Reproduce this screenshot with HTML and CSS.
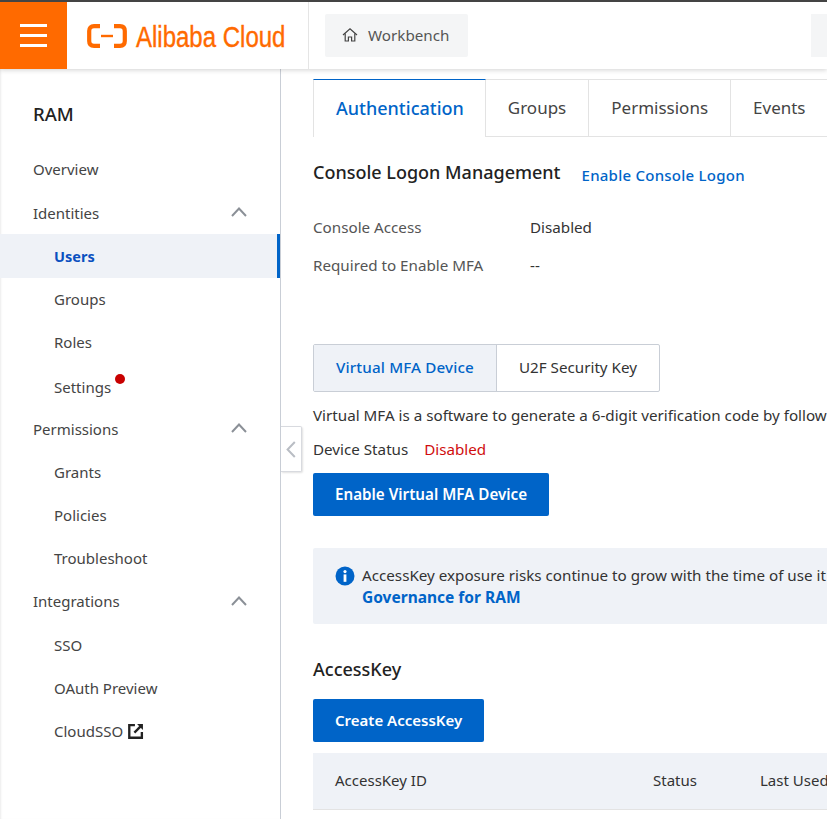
FILE: index.html
```html
<!DOCTYPE html>
<html lang="en">
<head>
    <meta charset="UTF-8">
    <meta name="viewport" content="width=device-width, initial-scale=1.0">
    <title>RAM - Users</title>
    <link rel="stylesheet" href="styles.css">
</head>
<body>
    <header class="topbar">
        <button class="menu-btn" aria-label="Menu">
            <span></span><span></span><span></span>
        </button>
        <div class="logo">
            <svg class="logo-mark" width="40" height="24" viewBox="0 0 40 24" fill="none" stroke="#ff6a00">
                <path d="M13 2.2H7Q2.2 2.2 2.2 7V17Q2.2 21.8 7 21.8H13" stroke-width="4.2"/>
                <path d="M27 2.2H33Q37.8 2.2 37.8 7V17Q37.8 21.8 33 21.8H27" stroke-width="4.2"/>
                <path d="M14 12H26" stroke-width="2.4"/>
            </svg>
            <span class="logo-text">Alibaba Cloud</span>
        </div>
        <div class="topbar-links">
            <a class="workbench">
                <svg width="16" height="16" viewBox="0 0 16 16" fill="none" stroke="#444" stroke-width="1.2">
                    <path d="M1 8 8 1.8 15 8"/>
                    <path d="M3.2 6.6V14H6.4V10H9.6V14H12.8V6.6"/>
                </svg>
                Workbench
            </a>
            <div class="top-stub"></div>
        </div>
    </header>

    <div class="layout">
        <aside class="sidebar">
            <h2 class="side-title">RAM</h2>
            <ul class="nav">
                <li class="nav-item">Overview</li>
                <li class="nav-item">Identities <svg class="caret" width="16" height="10" viewBox="0 0 16 10"><path d="M1 9 8 1.5 15 9"/></svg></li>
                <li class="nav-item sub active">Users</li>
                <li class="nav-item sub">Groups</li>
                <li class="nav-item sub">Roles</li>
                <li class="nav-item sub settings"><span class="with-dot">Settings<i class="dot"></i></span></li>
                <li class="nav-item">Permissions <svg class="caret" width="16" height="10" viewBox="0 0 16 10"><path d="M1 9 8 1.5 15 9"/></svg></li>
                <li class="nav-item sub">Grants</li>
                <li class="nav-item sub">Policies</li>
                <li class="nav-item sub">Troubleshoot</li>
                <li class="nav-item">Integrations <svg class="caret" width="16" height="10" viewBox="0 0 16 10"><path d="M1 9 8 1.5 15 9"/></svg></li>
                <li class="nav-item sub">SSO</li>
                <li class="nav-item sub">OAuth Preview</li>
                <li class="nav-item sub">CloudSSO
                    <svg class="ext" width="16" height="16" viewBox="0 0 15 15" fill="none" stroke="#222">
                        <path d="M6.5 2H1.2V13.8H13V8.5" stroke-width="2.2"/>
                        <path d="M6 9 12.5 2.5" stroke-width="2.2"/>
                        <path d="M8.5 1H14V6.5Z" fill="#222" stroke="none"/>
                    </svg>
                </li>
            </ul>
        </aside>

        <button class="collapse" aria-label="Collapse">
            <svg width="10" height="17" viewBox="0 0 10 17" fill="none" stroke="#b9bdc4" stroke-width="2"><path d="M8.8 1 1.6 8.5 8.8 16"/></svg>
        </button>

        <main class="content">
            <div class="tabs">
                <a class="tab current">Authentication</a>
                <a class="tab">Groups</a>
                <a class="tab">Permissions</a>
                <a class="tab">Events</a>
                <div class="tab-rest"></div>
            </div>

            <div class="section-head">
                <h3>Console Logon Management</h3>
                <a class="link">Enable Console Logon</a>
            </div>

            <dl class="info">
                <div class="info-row"><dt>Console Access</dt><dd>Disabled</dd></div>
                <div class="info-row"><dt>Required to Enable MFA</dt><dd>--</dd></div>
            </dl>

            <div class="switch">
                <a class="switch-item on">Virtual MFA Device</a>
                <a class="switch-item">U2F Security Key</a>
            </div>
            <p class="line desc">Virtual MFA is a software to generate a 6-digit verification code by following a time-based algorithm.</p>
            <p class="line status">Device Status <span class="red">Disabled</span></p>
            <button class="btn">Enable Virtual MFA Device</button>

            <div class="notice">
                <svg class="notice-icon" width="20" height="20" viewBox="0 0 20 20">
                    <circle cx="10" cy="10" r="9.5" fill="#0064c8"/>
                    <circle cx="10" cy="5.6" r="1.6" fill="#fff"/>
                    <rect x="8.6" y="8.4" width="2.8" height="7.4" fill="#fff"/>
                </svg>
                <div class="notice-text">
                    <div>AccessKey exposure risks continue to grow with the time of use it has been in service for your account.</div>
                    <a class="notice-link">Governance for RAM</a>
                </div>
            </div>

            <h3 class="ak-title">AccessKey</h3>
            <button class="btn create">Create AccessKey</button>

            <div class="table-head">
                <span class="col-id">AccessKey ID</span>
                <span class="col-status">Status</span>
                <span>Last Used</span>
            </div>
        </main>
    </div>
</body>
</html>
```

FILE: styles.css
```css
html, body {
    height: 100%;
}
body {
    margin: 0;
    overflow: hidden;
    font-family: "Noto Sans", "Open Sans", sans-serif;
    font-size: 15.2px;
    color: #333;
    background-color: #fff;
}
h2, h3, p, ul, dl, dd {
    margin: 0;
    padding: 0;
}
button {
    font-family: inherit;
}

/* top bar */
.topbar {
    position: relative;
    z-index: 2;
    display: flex;
    height: 67px;
    border-top: 2px solid #444;
    background-color: #fff;
    box-shadow: 0 1px 5px rgba(0, 0, 0, 0.18);
}
.menu-btn {
    display: flex;
    flex-direction: column;
    justify-content: center;
    gap: 7px;
    width: 67px;
    padding: 0 20px;
    border: 0;
    background-color: #ff6a00;
}
.menu-btn span {
    height: 3px;
    background-color: #fff;
}
.logo {
    display: flex;
    align-items: center;
    gap: 9px;
    width: 242px;
    padding-left: 20px;
    box-sizing: border-box;
    border-right: 1px solid #e5e5e5;
}
.logo-mark {
    flex: none;
}
.logo-text {
    margin-top: 2px;
    font-family: "Liberation Sans", sans-serif;
    font-size: 30px;
    color: #ff6a00;
    white-space: nowrap;
    -webkit-text-stroke: 0.4px #ff6a00;
    transform: scaleX(0.8);
    transform-origin: left center;
}
.topbar-links {
    display: flex;
    align-items: center;
    flex: 1;
    justify-content: space-between;
    padding-left: 16px;
}
.workbench {
    display: flex;
    align-items: center;
    gap: 10px;
    width: 143px;
    height: 43px;
    box-sizing: border-box;
    padding: 0 0 2px 17px;
    color: #555;
    background-color: #f4f5f6;
    border-radius: 2px;
}
.top-stub {
    width: 16px;
    height: 43px;
    background-color: #f4f5f6;
}

/* page body */
.layout {
    position: relative;
    display: flex;
    height: calc(100% - 69px);
}
.sidebar {
    flex: none;
    width: 281px;
    box-sizing: border-box;
    padding-top: 33px;
    border-right: 1px solid #c9ced6;
    box-shadow: inset 2px 0 2px -1px rgba(0, 0, 0, 0.08);
}
.side-title {
    padding-left: 33px;
    font-size: 18.5px;
    font-weight: 500;
    line-height: 24px;
    color: #222;
}
.nav {
    margin-top: 22px;
    list-style: none;
}
.nav-item {
    position: relative;
    display: flex;
    align-items: center;
    height: 43.2px;
    box-sizing: border-box;
    padding-left: 33px;
    font-size: 15px;
    color: #444;
}
.nav-item:first-child {
    padding-bottom: 2px;
}
.nav-item.sub {
    padding-left: 54px;
}
.nav-item.active {
    font-size: 14.5px;
    font-weight: 700;
    color: #0a50c0;
    background-color: #eff2f7;
    border-right: 3px solid #0064c8;
}
.nav-item.settings {
    padding-top: 2px;
}
.with-dot {
    position: relative;
}
.dot {
    position: absolute;
    top: -3px;
    right: -14px;
    width: 10px;
    height: 10px;
    border-radius: 50%;
    background-color: #c80000;
}
.caret {
    position: absolute;
    top: 16px;
    right: 33px;
    fill: none;
    stroke: #8b9097;
    stroke-width: 2;
}
.ext {
    margin-left: 5px;
}
.collapse {
    position: absolute;
    left: 281px;
    top: 357px;
    display: flex;
    align-items: center;
    justify-content: center;
    width: 21px;
    height: 46px;
    padding: 0;
    background-color: #fff;
    border: 1px solid #d8dadf;
    border-left: 0;
    border-radius: 0 2px 2px 0;
    box-shadow: 1px 1px 2px rgba(0, 0, 0, 0.12);
}

/* main column runs past the window edge */
.content {
    flex: 1;
    min-width: 0;
    padding: 10px 0 0 32px;
    overflow: hidden;
}
.tabs {
    display: flex;
    height: 58px;
}
.tab {
    display: flex;
    align-items: center;
    padding: 0 22px 2px;
    font-size: 17px;
    color: #444;
    border-top: 1px solid #e3e3e3;
    border-right: 1px solid #e3e3e3;
    border-bottom: 1px solid #e3e3e3;
}
.tab.current {
    font-size: 18px;
    font-weight: 500;
    color: #0064c8;
    border-top-color: #0064c8;
    border-left: 1px solid #e3e3e3;
    border-bottom: 0;
    padding-right: 21px;
}
.tab-rest {
    flex: 1;
    border-bottom: 1px solid #e3e3e3;
}
.section-head {
    display: flex;
    align-items: center;
    gap: 21px;
    margin-top: 22px;
}
.section-head h3, .ak-title {
    font-size: 18px;
    font-weight: 500;
    line-height: 26px;
    color: #222;
}
.link {
    margin-top: 6px;
    font-size: 15px;
    font-weight: 500;
    letter-spacing: 0.25px;
    color: #0064c8;
}
.info {
    margin-top: 23px;
}
.info-row {
    display: flex;
    align-items: center;
    height: 38px;
}
.info-row dt {
    width: 217px;
    color: #555;
}
.switch {
    display: inline-flex;
    margin-top: 60px;
    border: 1px solid #c9ced6;
    border-radius: 2px;
}
.switch-item {
    display: flex;
    align-items: center;
    height: 46px;
    box-sizing: border-box;
    padding: 0 22px 2px;
}
.switch-item.on {
    font-weight: 500;
    letter-spacing: 0.15px;
    color: #0064c8;
    background-color: #eff2f7;
    border-right: 1px solid #c9ced6;
}
.line {
    white-space: nowrap;
}
.desc {
    margin-top: 11px;
    line-height: 24px;
}
.status {
    margin-top: 10px;
    line-height: 24px;
}
.red {
    margin-left: 12px;
    color: #d00d0d;
}
.btn {
    display: block;
    height: 43px;
    padding: 0 22px 1px;
    margin-top: 12px;
    font-size: 15.2px;
    font-weight: 600;
    color: #fff;
    background-color: #0064c8;
    border: 0;
    border-radius: 2px;
}
.notice {
    display: flex;
    gap: 7px;
    width: 800px;
    height: 76px;
    box-sizing: border-box;
    margin-top: 32px;
    padding: 16px 22px;
    line-height: 22px;
    white-space: nowrap;
    background-color: #eff2f7;
    border-radius: 2px;
}
.notice-icon {
    flex: none;
    margin-top: 2px;
}
.notice-link {
    font-size: 15.5px;
    font-weight: 700;
    color: #0064c8;
}
.ak-title {
    margin-top: 32px;
}
.btn.create {
    margin-top: 17px;
    font-size: 15px;
}
.table-head {
    display: flex;
    align-items: center;
    width: 800px;
    height: 57px;
    box-sizing: border-box;
    margin-top: 11px;
    padding: 0 0 2px 22px;
    font-size: 15px;
    white-space: nowrap;
    background-color: #eff2f7;
    border-bottom: 1px solid #e3e3e3;
}
.col-id {
    width: 318px;
}
.col-status {
    width: 107px;
}
```
